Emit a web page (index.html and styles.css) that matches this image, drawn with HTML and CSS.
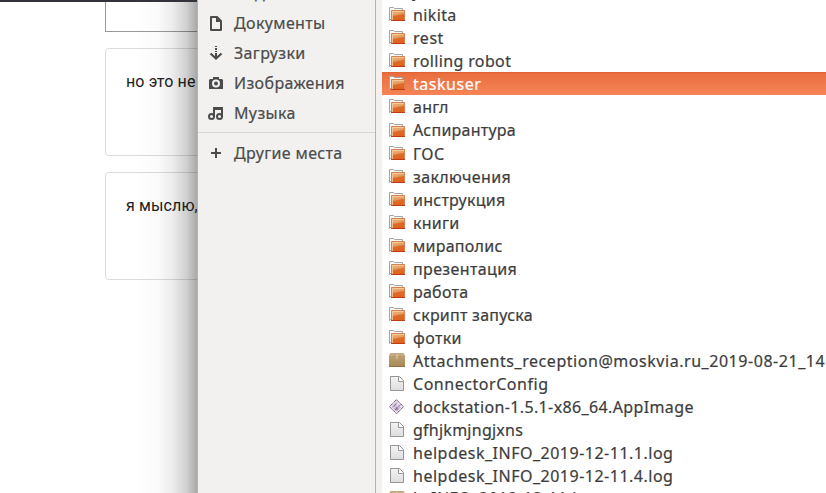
FILE: index.html
```
<!DOCTYPE html>
<html lang="ru">
<head>
<meta charset="utf-8">
<title>Файлы</title>
<link rel="stylesheet" href="styles.css">
</head>
<body>
<svg class="defs" width="0" height="0">
  <defs>
    <linearGradient id="fg" x1="0" y1="0" x2=".25" y2="1"><stop offset="0" stop-color="#efc08a"/><stop offset=".48" stop-color="#e79a5c"/><stop offset=".6" stop-color="#dd6c2c"/><stop offset="1" stop-color="#e0621f"/></linearGradient>
    <linearGradient id="bg" x1="0" y1="0" x2="0" y2="1"><stop offset="0" stop-color="#c5a67b"/><stop offset="1" stop-color="#a68754"/></linearGradient>
    <linearGradient id="pg" x1="0" y1="0" x2="0" y2="1"><stop offset="0" stop-color="#f3f3f3"/><stop offset="1" stop-color="#dddddd"/></linearGradient>
    <symbol id="folder" viewBox="0 0 16 16"><path d="M.5 13.500V.5h4l1 1h8v11h-13z" fill="#f7f7f5" stroke="#a5a5a1"/><path d="M2.500 3.500h13v10h-13z" fill="url(#fg)" stroke="#d9804f"/><path d="M3.500 13V4.500H15" fill="none" stroke="#f4cfa4" stroke-opacity=".8"/><path d="M2 13.500h14" stroke="#be3b13"/></symbol>
    <symbol id="box" viewBox="0 0 16 16"><path d="M1.500 0h13L16 3v11H0V3z" fill="url(#bg)"/><path d="M1.500 0h13L16 3.500H0z" fill="#c8aa82"/><path d="M0 3.500h16" stroke="#ad8e61" stroke-opacity=".4"/><path d="M7.500 1h1v5h-1z" fill="#e3d2b7"/><path d="M0 13.500h16" stroke="#8f7143"/></symbol>
    <symbol id="page" viewBox="0 0 16 16"><path d="M1.500.5h9l4 4v10h-13z" fill="url(#pg)" stroke="#969696"/><path d="M9.500.5v5h5" fill="#fff" stroke="#969696"/></symbol>
    <symbol id="app" viewBox="0 0 16 16"><path d="M7.500 .7l7 7-7 7-7-7z" fill="#eee8f0" stroke="#5d3b68" stroke-dasharray="1.500 .5"/><path d="M7.500 2.700l5 5-5 5-5-5z" fill="#c6b4cc"/><path d="M4 9.500l5-5v4l3-1.500" fill="none" stroke="#f5f0f6"/><path d="M6 11l5.500-5M4.500 8l2.500-3M8 11V8" stroke="#86659a"/></symbol>
  </defs>
</svg>
<div class="screen">
  <section class="web">
    <div class="field"></div>
    <div class="card">но это не</div>
    <div class="card">я мыслю,</div>
    <div class="shadow"></div>
    <div class="topbar"></div>
  </section>
  <nav class="places">
    <div class="place"><i></i><span>Видео</span></div>
    <div class="place"><svg viewBox="0 0 16 16"><path d="M3 2h6l4 4v9H3z" fill="none" stroke="#4b4b4b" stroke-width="2" stroke-linejoin="round"/><path d="M8 2v5h5z" fill="#4b4b4b"/></svg><span>Документы</span></div>
    <div class="place"><svg viewBox="0 0 16 16"><path d="M7 1h2v1H7zM7 3h2v2H7zM7 6h2v1H7zM7 8h2v4H7z" fill="#4b4b4b"/><path d="M2.500 8.500L8 13.500l5.500-5" fill="none" stroke="#4b4b4b" stroke-width="2.200"/></svg><span>Загрузки</span></div>
    <div class="place"><svg viewBox="0 0 16 16"><path fill="#4b4b4b" fill-rule="evenodd" d="M2 4h3V2h6v2h3l1 1v9H1V5zM8 4.500a4 4 0 100 8 4 4 0 000-8zm0 2a2 2 0 110 4 2 2 0 010-4z"/></svg><span>Изображения</span></div>
    <div class="place"><svg viewBox="0 0 16 16"><path d="M6 12V3h8v9M6 4h8" fill="none" stroke="#4b4b4b" stroke-width="2"/><circle cx="3.500" cy="11.500" r="2.500" fill="none" stroke="#4b4b4b" stroke-width="2"/><circle cx="11.500" cy="11.500" r="2.500" fill="none" stroke="#4b4b4b" stroke-width="2"/></svg><span>Музыка</span></div>
    <hr>
    <div class="place"><svg viewBox="0 0 16 16"><path d="M3 8h10M8 3v10" stroke="#4b4b4b" stroke-width="2"/></svg><span>Другие места</span></div>
  </nav>
  <main class="files">
    <div class="file first"><svg><use href="#folder"/></svg><span>java_</span></div>
    <div class="file"><svg><use href="#folder"/></svg><span>nikita</span></div>
    <div class="file"><svg><use href="#folder"/></svg><span class="wide">rest</span></div>
    <div class="file"><svg><use href="#folder"/></svg><span>rolling robot</span></div>
    <div class="file selected"><svg><use href="#folder"/></svg><span class="wide">taskuser</span></div>
    <div class="file tall"><svg><use href="#folder"/></svg><span class="narrow">англ</span></div>
    <div class="file raised"><svg><use href="#folder"/></svg><span class="narrow">Аспирантура</span></div>
    <div class="file"><svg><use href="#folder"/></svg><span class="wide">ГОС</span></div>
    <div class="file"><svg><use href="#folder"/></svg><span>заключения</span></div>
    <div class="file"><svg><use href="#folder"/></svg><span class="narrow">инструкция</span></div>
    <div class="file"><svg><use href="#folder"/></svg><span class="narrow">книги</span></div>
    <div class="file"><svg><use href="#folder"/></svg><span class="narrow">мираполис</span></div>
    <div class="file"><svg><use href="#folder"/></svg><span>презентация</span></div>
    <div class="file"><svg><use href="#folder"/></svg><span class="narrow">работа</span></div>
    <div class="file"><svg><use href="#folder"/></svg><span class="narrow">скрипт запуска</span></div>
    <div class="file"><svg><use href="#folder"/></svg><span>фотки</span></div>
    <div class="file"><svg><use href="#box"/></svg><span class="wide">Attachments_reception@moskvia.ru_2019-08-21_14</span></div>
    <div class="file"><svg><use href="#page"/></svg><span class="wide">ConnectorConfig</span></div>
    <div class="file"><svg><use href="#app"/></svg><span>dockstation-1.5.1-x86_64.AppImage</span></div>
    <div class="file"><svg><use href="#page"/></svg><span class="narrow">gfhjkmjngjxns</span></div>
    <div class="file"><svg><use href="#page"/></svg><span class="log">helpdesk_INFO_2019-12-11.1.log</span></div>
    <div class="file"><svg><use href="#page"/></svg><span class="log">helpdesk_INFO_2019-12-11.4.log</span></div>
    <div class="file last"><svg><use href="#box"/></svg><span class="log">h_INFO_2019-12-11.log</span></div>
  </main>
</div>
</body>
</html>
```
FILE: styles.css
```
* { box-sizing: border-box; }
body { margin: 0; overflow: hidden; background: #fff; }
.defs { position: absolute; }
.screen { display: flex; width: 826px; height: 493px; overflow: hidden; font-family: "Noto Sans", sans-serif; font-size: 16px; color: #3c3c3c; }
.web { position: relative; width: 197px; flex: none; padding-left: 105px; overflow: hidden; }
.topbar { position: absolute; left: 0; top: 0; width: 197px; height: 2px; background: #33343a; }
.field { width: 200px; height: 32px; border: 1px solid #999; }
.card { width: 200px; height: 108px; margin-top: 16px; padding: 23px 20px; border: 1px solid #dcdcdc; border-radius: 4px; font: 16px/19px Roboto, sans-serif; letter-spacing: .12px; color: #212121; white-space: nowrap; }
.shadow { position: absolute; top: 0; right: 0; width: 60px; height: 100%; background: linear-gradient(to right, rgba(0,0,0,0), rgba(0,0,0,.02) 35%, rgba(0,0,0,.07) 58%, rgba(0,0,0,.18) 82%, rgba(0,0,0,.34)); }
.places { width: 179px; flex: none; background: #f2f1ef; border-left: 1px solid #b4b2af; border-right: 1px solid #b6b3b0; }
.place { display: flex; align-items: center; height: 30px; padding-left: 10px; gap: 10px; line-height: 30px; letter-spacing: .36px; color: #4b4b4b; white-space: nowrap; -webkit-text-stroke: .2px; }
.place:first-child { margin-top: -22px; }
.place svg, .place i { width: 16px; height: 16px; flex: none; }
.places hr { margin: 4px 0 5px; border: 0; height: 1px; background: #d8d6d3; }
.files { flex: 1; min-width: 0; margin-top: -20px; border-left: 6px solid #f2f1ef; background: #fff; }
.file { display: flex; height: 23px; padding: 3px 0 0 7px; gap: 8px; line-height: 18px; letter-spacing: .37px; white-space: nowrap; -webkit-text-stroke: .2px; }
.file svg { width: 16px; height: 16px; flex: none; margin-top: 1px; }
.file.tall { height: 24px; }
.file .wide { letter-spacing: .54px; }
.file .log { letter-spacing: .5px; }
.file .narrow { letter-spacing: .25px; }
.raised span { margin-top: -1px; }
.first span { margin-top: -1px; }
.last span { margin-top: -1px; }
.selected { color: #fff; background: linear-gradient(#e2602f, #e96f40 8%, #f68456); }
```
